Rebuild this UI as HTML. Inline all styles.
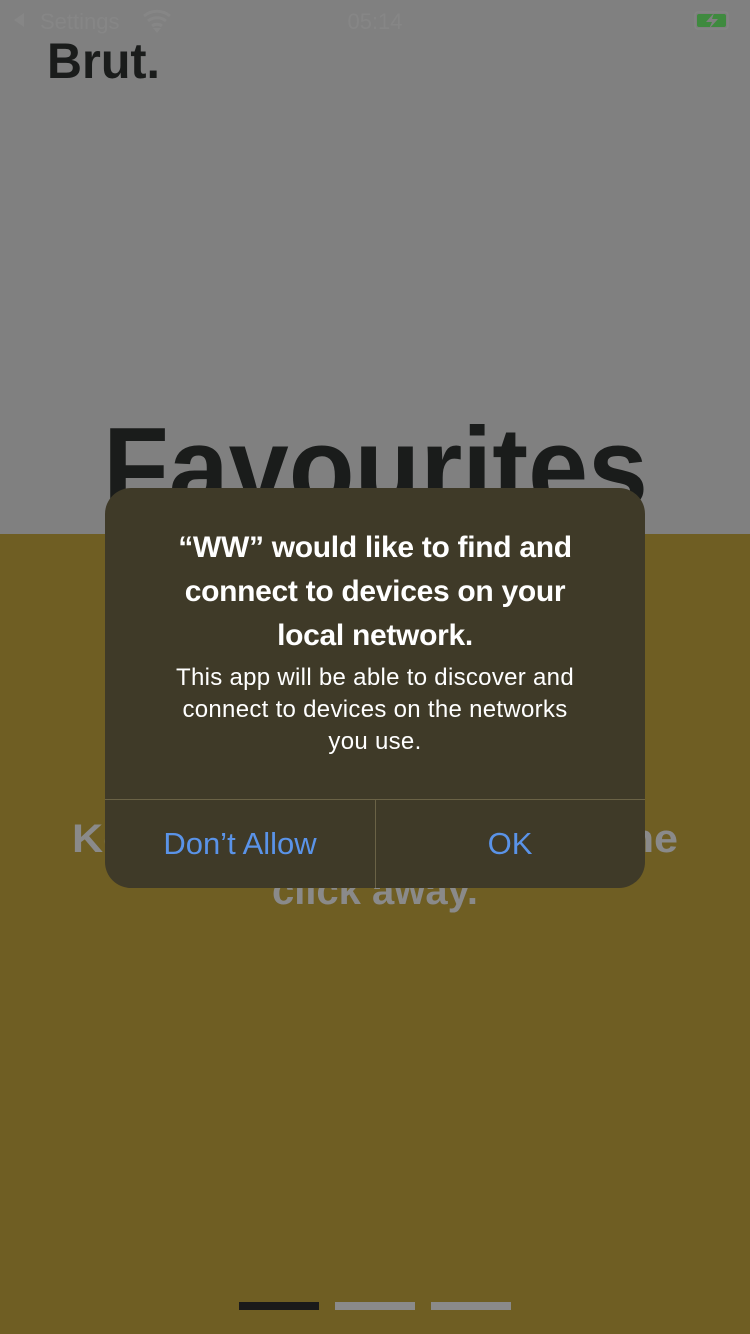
<!DOCTYPE html>
<html><head><meta charset="utf-8"><style>
html,body{margin:0;padding:0}
body{width:750px;height:1334px;position:relative;overflow:hidden;background:#808080;font-family:"Liberation Sans",sans-serif}
.bot{position:absolute;left:0;top:534px;width:750px;height:800px;background:#6f5e23}
svg{position:absolute;left:0;top:0}
.dlg{position:absolute;left:105px;top:488px;width:540px;height:400px;border-radius:26px;background:#3f3a28;overflow:hidden;color:#fff;text-align:center}
.t{position:absolute;left:0;top:38px;width:540px;font-size:30px;font-weight:bold;line-height:44px;letter-spacing:-0.3px}
.m{position:absolute;left:0;top:174px;width:540px;font-size:24px;line-height:32px;letter-spacing:0.3px}
.hl{position:absolute;left:0;top:311px;width:540px;height:1px;background:#6a6246}
.vl{position:absolute;left:270px;top:311px;width:1px;height:89px;background:#6a6246}
.b{position:absolute;top:312px;height:88px;line-height:88px;width:270px;font-size:31px;color:#5a93e8}
.bar{position:absolute;top:1302px;width:80px;height:8px}
</style></head><body>
<div class="bot"></div>
<svg width="750" height="1334" xmlns="http://www.w3.org/2000/svg">
<text x="47" y="78" font-family="Liberation Sans" font-weight="bold" font-size="50" fill="#1a1c1b" textLength="113" lengthAdjust="spacingAndGlyphs">Brut.</text>
<text x="40" y="29" font-family="Liberation Sans" font-size="22" fill="#868686">Settings</text>
<path d="M14 20 L24 13 L24 27 Z" fill="#868686"/>
<path d="M144 16 A20 20 0 0 1 170 16 M148 21 A14 14 0 0 1 166 21 M152 26 A8 8 0 0 1 162 26" stroke="#868686" stroke-width="3" fill="none"/>
<path d="M153 28 L157 33 L161 28 Z" fill="#868686"/>
<text x="375" y="29" text-anchor="middle" font-family="Liberation Sans" font-size="22" fill="#868686">05:14</text>
<rect x="695" y="12" width="33" height="17" rx="3" fill="none" stroke="#868686" stroke-width="1.5"/>
<rect x="697" y="14" width="29" height="13" rx="2" fill="#3f8a3f"/>
<path d="M714 13 L706 22 L712 22 L709 29 L718 19 L712 19 Z" fill="#808080"/>
<text x="103" y="507" font-family="Liberation Sans" font-weight="bold" font-size="114" fill="#1a1c1b" textLength="545" lengthAdjust="spacingAndGlyphs">Favourites</text>
<text x="72" y="852" font-family="Liberation Sans" font-weight="bold" font-size="40" fill="#8a8a8a" textLength="606" lengthAdjust="spacingAndGlyphs">Keep your favourites just one</text>
<text x="375" y="904" text-anchor="middle" font-family="Liberation Sans" font-weight="bold" font-size="40" fill="#8a8a8a">click away.</text>
</svg>
<div class="dlg">
<div class="t">“WW” would like to find and<br>connect to devices on your<br>local network.</div>
<div class="m">This app will be able to discover and<br>connect to devices on the networks<br>you use.</div>
<div class="hl"></div><div class="vl"></div>
<div class="b" style="left:0">Don’t Allow</div>
<div class="b" style="left:270px">OK</div>
</div>
<div class="bar" style="left:239px;background:#1a1a1a"></div>
<div class="bar" style="left:335px;background:#8a8a8a"></div>
<div class="bar" style="left:431px;background:#8a8a8a"></div>
</body></html>
